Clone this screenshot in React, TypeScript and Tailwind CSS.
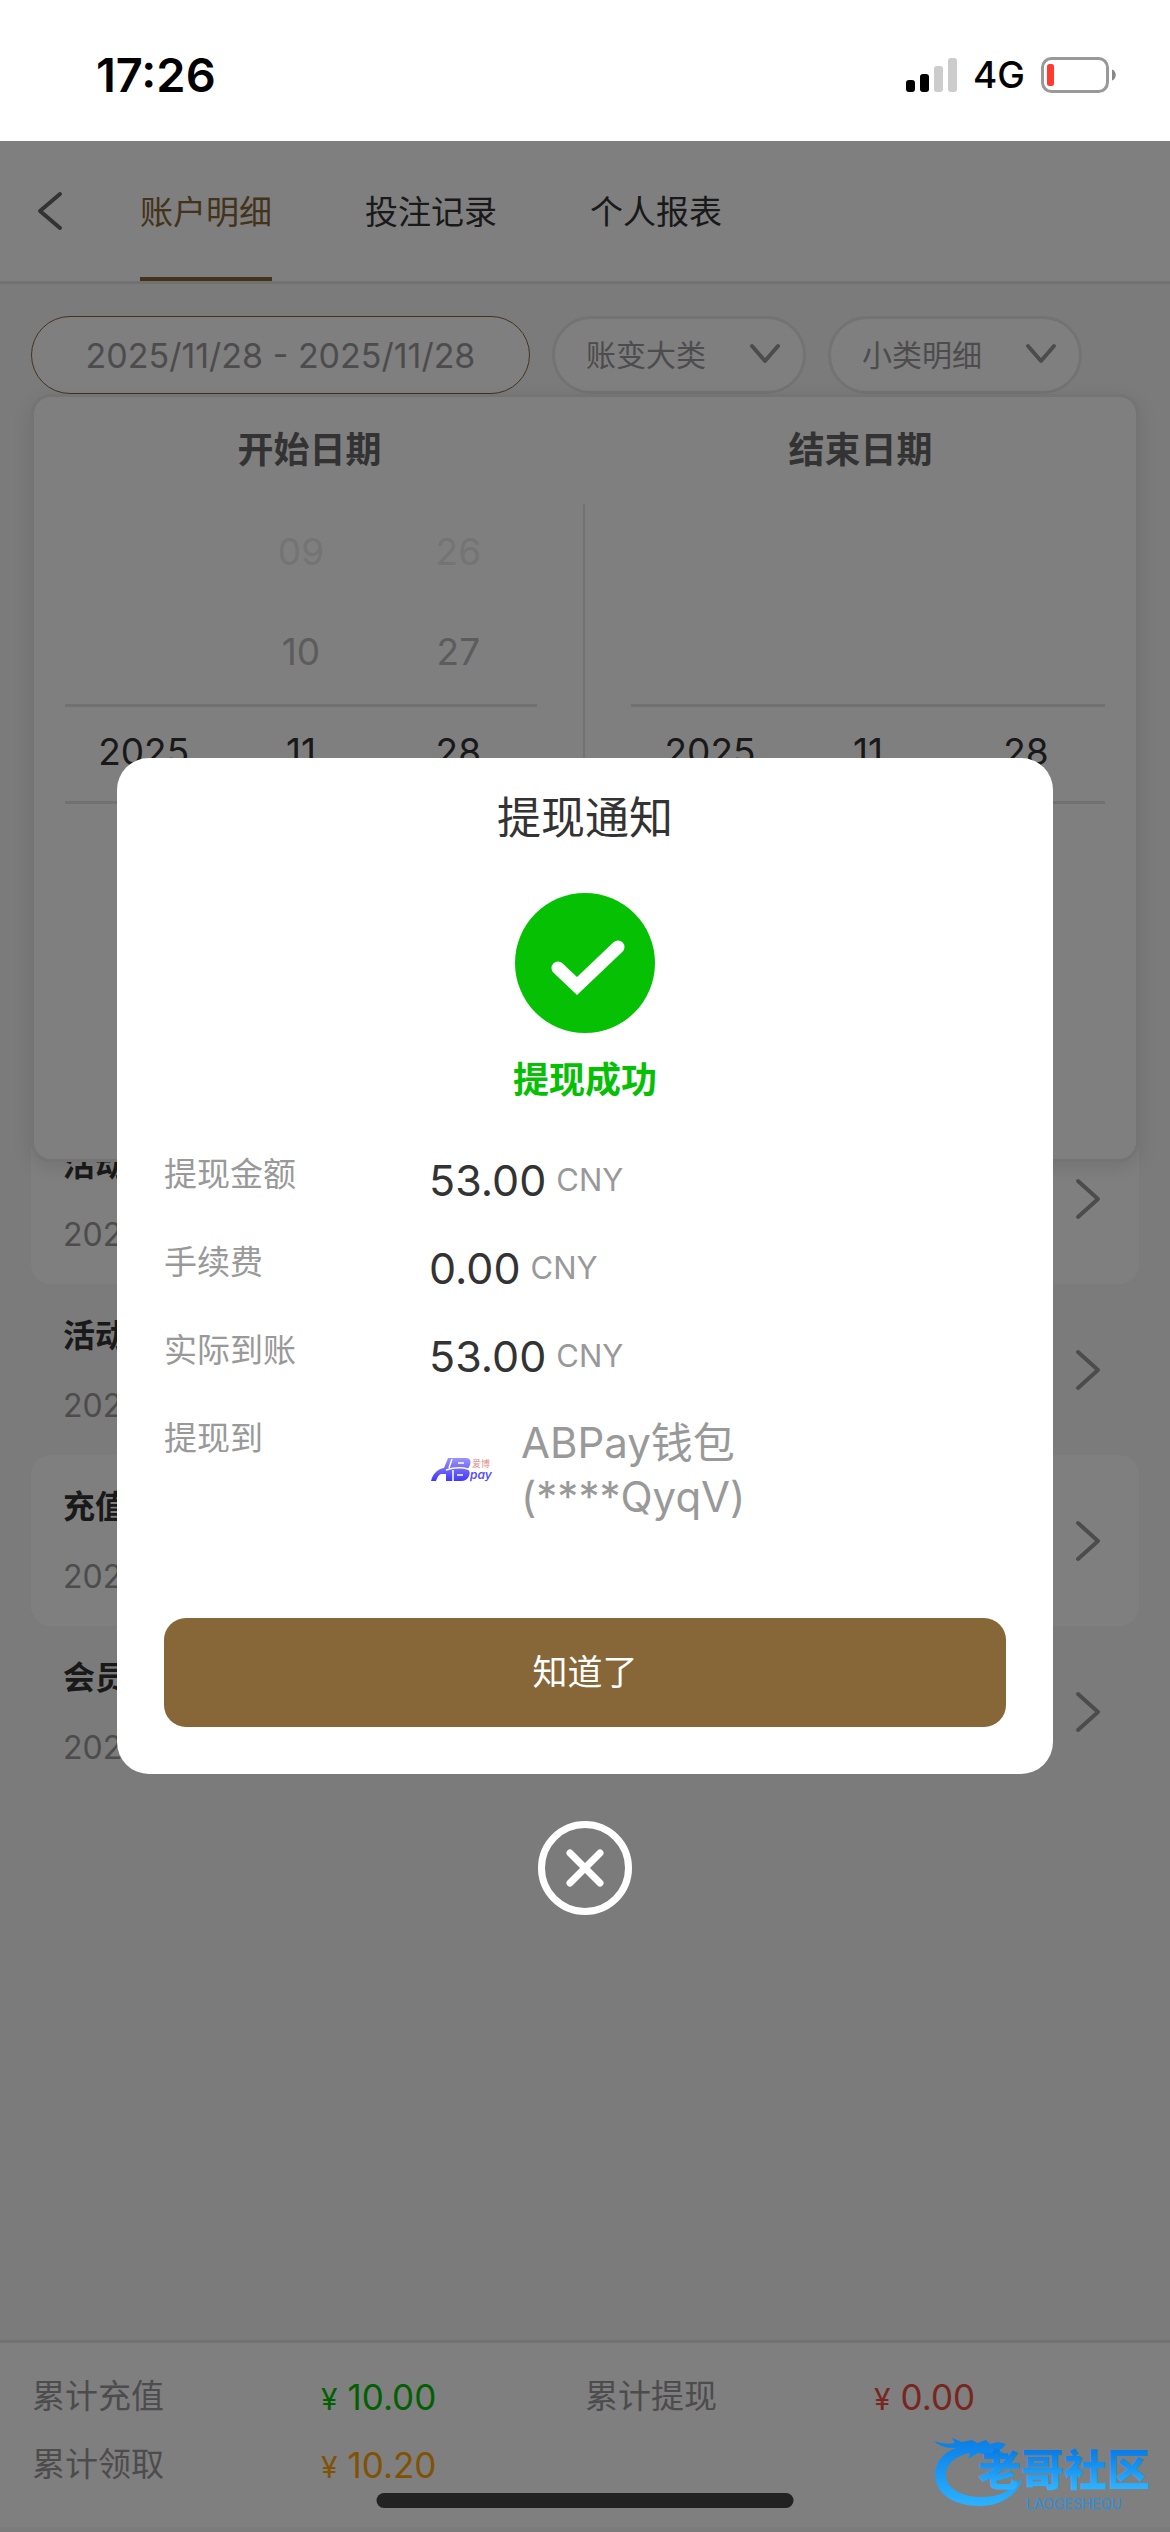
import { useState } from "react";

interface Tab {
  id: string;
  label: string;
}

interface DateColumn {
  title: string;
  rows: string[][];
  className: string;
}

interface RecordItem {
  id: number;
  title: string;
  date: string;
}

interface Total {
  label: string;
  amount: string;
  color: string;
}

const tabs: Tab[] = [
  { id: "account", label: "账户明细" },
  { id: "bets", label: "投注记录" },
  { id: "report", label: "个人报表" },
];

const dateColumns: DateColumn[] = [
  {
    title: "开始日期",
    rows: [["", "09", "26"], ["", "10", "27"], ["2025", "11", "28"]],
    className: "ml-[31px] mr-[46px]",
  },
  {
    title: "结束日期",
    rows: [["", "", ""], ["", "", ""], ["2025", "11", "28"]],
    className: "ml-[46px] mr-[31px]",
  },
];

// far rows fade out, the third one is the selected row
const rowStyles = [
  "text-[#e8e8e8]",
  "text-[#b8b8b8]",
  "border-y-[3px] border-[#e3e3e3] text-[#333]",
];

const records: RecordItem[] = [
  { id: 1, title: "活动", date: "2025" },
  { id: 2, title: "活动", date: "2025" },
  { id: 3, title: "充值", date: "2025" },
  { id: 4, title: "会员", date: "2025" },
];

const totals: Total[] = [
  { label: "累计充值", amount: "10.00", color: "text-[#05c003]" },
  { label: "累计提现", amount: "0.00", color: "text-[#f04c40]" },
  { label: "累计领取", amount: "10.20", color: "text-[#ffa50a]" },
];

const amounts = [
  { label: "提现金额", value: "53.00" },
  { label: "手续费", value: "0.00" },
  { label: "实际到账", value: "53.00" },
];

function StatusBar() {
  return (
    <div className="flex h-[141px] items-center justify-between bg-white pl-24 pr-[53px] pt-2 text-black">
      <span className="text-[47px] font-semibold leading-[54px]">17:26</span>
      <div className="flex items-center">
        <svg width="51" height="34" viewBox="0 0 51 34">
          <rect x="0" y="22" width="9" height="12" rx="3" fill="#000" />
          <rect x="14" y="16" width="9" height="18" rx="3" fill="#000" />
          <rect x="28" y="8" width="9" height="26" rx="3" fill="#ccc" />
          <rect x="42" y="0" width="9" height="34" rx="3" fill="#ccc" />
        </svg>
        <span className="ml-4 text-[37px] font-medium leading-[44px]">4G</span>
        <svg className="ml-4" width="76" height="36" viewBox="0 0 76 36">
          <rect x="1.5" y="1.5" width="65" height="33" rx="9" fill="none" stroke="#999" strokeWidth="3" />
          <rect x="6" y="7" width="7" height="22" rx="2.5" fill="#ff3b30" />
          <path d="M71 12.500c5 1.500 5 9.500 0 11z" fill="#888" />
        </svg>
      </div>
    </div>
  );
}

function SelectPill({ label }: { label: string }) {
  return (
    <div className="relative w-[254px]">
      <select
        aria-label={label}
        className="h-[78px] w-full appearance-none rounded-full border-[3px] border-[#e6e6e6] bg-white pl-[31px] text-[30px] text-[#999]"
      >
        <option>{label}</option>
      </select>
      <svg className="pointer-events-none absolute right-[25px] top-[27px]" width="32" height="22" viewBox="0 0 32 22" fill="none" stroke="#999" strokeWidth="4" strokeLinecap="round" strokeLinejoin="round">
        <path d="M3 3l13 15L29 3" />
      </svg>
    </div>
  );
}

function DatePanel() {
  return (
    <div className="relative z-10 mx-[31px] h-[768px] rounded-[20px] border-[3px] border-[#e8e8e8] bg-white shadow-[0_6px_20px_rgba(0,0,0,0.1)]">
      <div className="grid grid-cols-2">
        {dateColumns.map((column, i) => (
          <section key={column.title}>
            <h2 className="mt-[29px] text-center text-[36px] font-bold leading-[48px] text-[#666]">{column.title}</h2>
            <div className={i === 0 ? "mt-[30px] h-[500px] border-r-2 border-[#e3e3e3]" : "mt-[30px] h-[500px]"}>
              <div className={column.className}>
                {column.rows.map((row, r) => (
                  <div key={r} className={`grid h-[100px] grid-cols-3 items-center pb-1 text-center text-[37px] leading-[48px] ${rowStyles[r]}`}>
                    {row.map((cell, c) => (
                      <span key={c}>{cell}</span>
                    ))}
                  </div>
                ))}
              </div>
            </div>
          </section>
        ))}
      </div>
    </div>
  );
}

function RecordRow({ item, filled }: { item: RecordItem; filled: boolean }) {
  return (
    <li className={`flex items-center justify-between rounded-[20px] pl-8 pr-[37px] ${filled ? "bg-white" : ""}`}>
      <div className="pb-[25px] pt-7">
        <p className="text-[32px] font-bold leading-[48px] text-[#333]">{item.title}</p>
        <p className="mt-[22px] text-[32px] leading-[48px] text-[#999]">{item.date}</p>
      </div>
      <svg width="28" height="42" viewBox="0 0 28 42" fill="none" stroke="#999" strokeWidth="4" strokeLinecap="round" strokeLinejoin="round">
        <path d="M4 3l20 18L4 39" />
      </svg>
    </li>
  );
}

function PayLogo() {
  return (
    <svg width="66" height="26" viewBox="0 0 66 26" className="shrink-0">
      <defs>
        <linearGradient id="pay" x1="0" y1="0" x2="0" y2="1">
          <stop offset="0" stopColor="#9a94f8" />
          <stop offset="1" stopColor="#4338fb" />
        </linearGradient>
      </defs>
      <path d="M2 24C4 16 9 12 15 11L19 1H37Q43 1 41 8Q40 11 38 12Q42 14 40 19Q38 24 32 24H17V17H12Q9 18 7 24Z" fill="url(#pay)" />
      <path d="M23 2L20 11M17 13Q29 9 39 12M24 13V24M29 6H35M28 18H34" fill="none" stroke="#fff" strokeWidth="1.500" />
      <text x="43" y="10" fontSize="9" fill="#e08a84" fontFamily="'Noto Sans CJK SC', sans-serif">爱博</text>
      <text x="41" y="22" fontSize="12" fontStyle="italic" fontWeight="600" fill="#5a50fa" fontFamily="Inter, sans-serif">pay</text>
    </svg>
  );
}

function WithdrawModal({ onClose }: { onClose: () => void }) {
  return (
    <div role="dialog" aria-labelledby="modal-title" className="absolute inset-0 z-20 flex flex-col items-center justify-center bg-black/50">
      <div className="w-4/5 rounded-[32px] bg-white px-[47px] pb-[47px] pt-[30px]">
        <h1 id="modal-title" className="text-center text-[44px] leading-[60px] text-[#333]">提现通知</h1>
        <svg className="mx-auto mt-[45px]" width="140" height="140" viewBox="0 0 140 140">
          <circle cx="70" cy="70" r="70" fill="#05c003" />
          <path d="M43 75L62 93L103 54" fill="none" stroke="#fff" strokeWidth="13" strokeLinecap="round" />
        </svg>
        <p className="mt-[23px] text-center text-[36px] font-bold leading-[48px] text-[#05c003]">提现成功</p>

        <dl className="mt-12 space-y-8 text-[#999]">
          {amounts.map(row => (
            <div key={row.label} className="flex items-start">
              <dt className="w-[265px] text-[33px] leading-[44px]">{row.label}</dt>
              <dd className="flex items-center gap-[10px] leading-[56px]">
                <span className="text-[43px] text-[#333]">{row.value}</span>
                <span className="text-[31px]">CNY</span>
              </dd>
            </div>
          ))}
          <div className="flex items-start">
            <dt className="w-[265px] text-[33px] leading-[44px]">提现到</dt>
            <dd className="flex items-center gap-[26px]">
              <PayLogo />
              <span className="text-[42px] leading-[54px]">
                ABPay钱包
                <br />
                (****QyqV)
              </span>
            </dd>
          </div>
        </dl>

        <button type="button" onClick={onClose} className="mt-[94px] h-[109px] w-full rounded-[22px] bg-[#876637] text-[35px] text-white">
          知道了
        </button>
      </div>
      <button type="button" aria-label="关闭" onClick={onClose} className="mt-[47px]">
        <svg width="94" height="94" viewBox="0 0 94 94" fill="none" stroke="#fff" strokeLinecap="round">
          <circle cx="47" cy="47" r="43.500" strokeWidth="7" />
          <path d="M32 32l30 30M62 32L32 62" strokeWidth="7" />
        </svg>
      </button>
    </div>
  );
}

function CommunityLogo() {
  return (
    <svg className="absolute bottom-5 right-[12px] z-30" width="226" height="80" viewBox="0 0 226 80">
      <defs>
        <linearGradient id="brand" gradientUnits="userSpaceOnUse" x1="0" y1="8" x2="0" y2="74">
          <stop offset="0" stopColor="#0a7ee6" />
          <stop offset="1" stopColor="#2cb2ff" />
        </linearGradient>
        <linearGradient id="brandText" gradientUnits="userSpaceOnUse" x1="0" y1="20" x2="0" y2="56">
          <stop offset="0" stopColor="#0a7ee6" />
          <stop offset="1" stopColor="#2cb2ff" />
        </linearGradient>
      </defs>
      {/* dragon head and tail ring */}
      <path d="M2 9Q12 13 23 11L20 6L30 10L40 8L45 11L54 8L58 12L66 10L74 12L70 17L58 18L71 20L72 23L58 23L46 21L36 27L38 21C22 24 13 34 14 44C15 58 32 65 50 65C68 65 80 58 90 46C90 56 74 74 48 74C22 74 3 62 3 42C3 30 12 20 24 16Q10 17 2 9Z" fill="url(#brand)" />
      <text x="46" y="54" fontSize="43" fontWeight="900" fill="url(#brandText)" fontFamily="'Noto Sans CJK SC', sans-serif">老哥社区</text>
      <text x="94" y="77" fontSize="14" fill="#2a8fdc" fontFamily="Inter, sans-serif">LAOGESHEQU</text>
    </svg>
  );
}

export default function App() {
  const [activeTab, setActiveTab] = useState("account");
  const [open, setOpen] = useState(true);

  return (
    <div className="flex min-h-screen flex-col bg-[#f6f6f6] font-['Inter','Noto_Sans_CJK_SC',sans-serif]">
      <StatusBar />

      <div className="relative flex flex-1 flex-col">
        <header className="flex h-[143px] items-stretch border-b-[3px] border-[#e3e3e3] bg-white">
          <button type="button" aria-label="返回" className="w-[140px] pl-9">
            <svg width="28" height="42" viewBox="0 0 28 42" fill="none" stroke="#666" strokeWidth="4" strokeLinecap="round" strokeLinejoin="round">
              <path d="M24 4L4 21L24 38" />
            </svg>
          </button>
          <nav className="flex gap-[93px] text-[33px]">
            {tabs.map(tab => (
              <button
                key={tab.id}
                type="button"
                onClick={() => setActiveTab(tab.id)}
                className={`border-b-4 pt-2 ${tab.id === activeTab ? "border-[#876637] text-[#876637]" : "border-transparent text-[#333]"}`}
              >
                {tab.label}
              </button>
            ))}
          </nav>
        </header>

        <div className="flex gap-[22px] px-[31px] pt-8">
          <button type="button" className="h-[78px] w-[499px] rounded-full border border-[#876637] bg-white text-[34px] text-[#999]">
            2025/11/28 - 2025/11/28
          </button>
          <SelectPill label="账变大类" />
          <SelectPill label="小类明细" />
        </div>

        <DatePanel />

        <ul className="-mt-[49px] px-[31px]">
          {records.map((item, i) => (
            <RecordRow key={item.id} item={item} filled={i % 2 === 0} />
          ))}
        </ul>

        <footer className="mb-[5px] mt-auto border-t-[3px] border-[#e3e3e3] bg-white px-8 pb-7 pt-5">
          <dl className="grid grid-cols-2 text-[33px] text-[#999]">
            {totals.map(total => (
              <div key={total.label} className="flex h-[68px] items-center">
                <dt className="w-[289px]">{total.label}</dt>
                <dd className={`flex items-baseline gap-[10px] text-[35px] ${total.color}`}>
                  <span className="text-[30px]">¥</span>
                  {total.amount}
                </dd>
              </div>
            ))}
          </dl>
        </footer>

        {open && <WithdrawModal onClose={() => setOpen(false)} />}

        <CommunityLogo />
        <div className="absolute bottom-6 left-1/2 z-30 h-[15px] w-[417px] -translate-x-1/2 rounded-full bg-[#222]" />
      </div>
    </div>
  );
}
